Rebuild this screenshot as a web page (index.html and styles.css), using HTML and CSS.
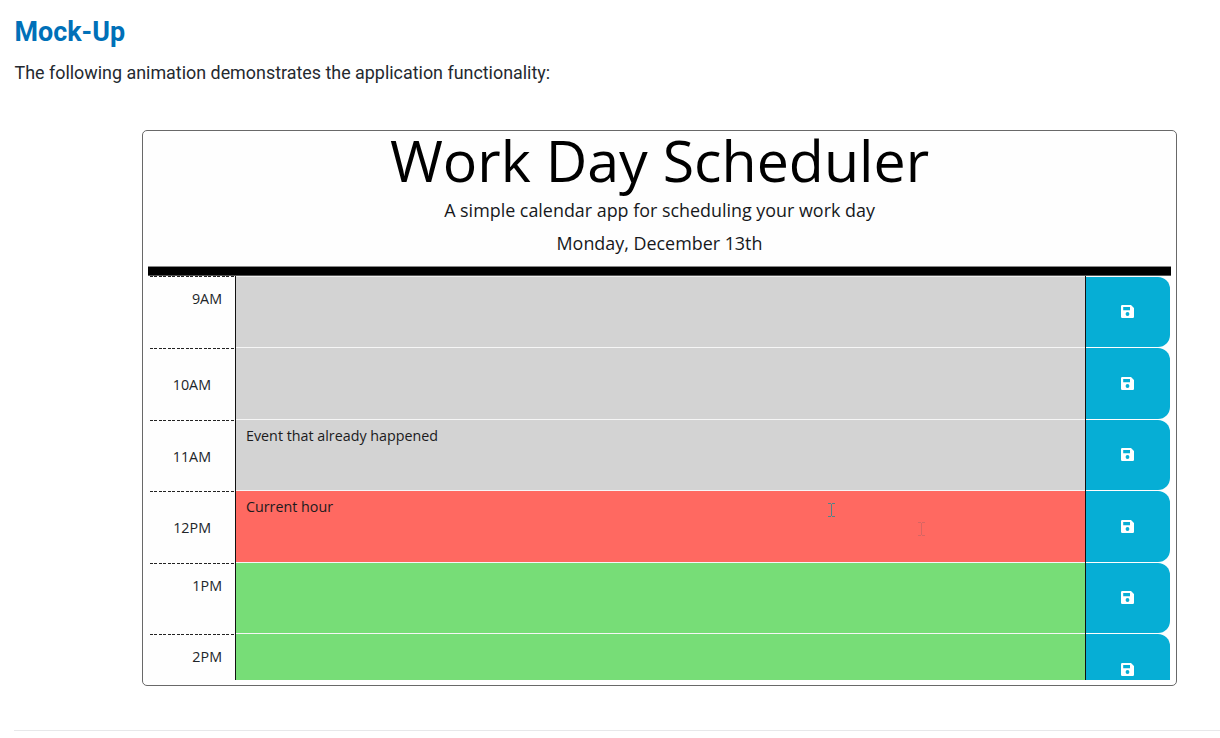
FILE: index.html
```html
<!DOCTYPE html>
<html lang="en">
<head>
<meta charset="utf-8">
<title>Work Day Scheduler</title>
<link rel="stylesheet" href="styles.css">
</head>
<body>
<svg class="defs" aria-hidden="true">
  <symbol id="save" viewBox="0 0 13 13"><path fill-rule="evenodd" d="M1.2 0H10l3 3v8.8q0 1.2-1.2 1.2H1.2Q0 13 0 11.8V1.2Q0 0 1.2 0zM2.2 2v3.2h6.8V2zM6.5 7.1a1.9 1.9 0 1 0 0 3.8 1.9 1.9 0 0 0 0-3.8z"/></symbol>
  <symbol id="caret" viewBox="0 0 7 14"><path d="M0 .5h3M4 .5h3M0 13.500h3M4 13.500h3M3.500 1v12" fill="none" stroke="currentColor"/></symbol>
</svg>
<main class="page">
  <h2 class="heading">Mock-Up</h2>
  <p class="intro">The following animation demonstrates the application functionality:</p>
  <div class="frame">
    <div class="app">
      <header class="header">
        <h1 class="title">Work Day Scheduler</h1>
        <p class="lead">A simple calendar app for scheduling your work day</p>
        <p class="date">Monday, December 13th</p>
      </header>
      <div class="rows">
        <div class="row first"><div class="hour short">9AM</div><div class="event past"></div><div class="save"><svg class="icon"><use href="#save"/></svg></div></div>
        <div class="row"><div class="hour">10AM</div><div class="event past"></div><div class="save"><svg class="icon"><use href="#save"/></svg></div></div>
        <div class="row"><div class="hour">11AM</div><div class="event past">Event that already happened</div><div class="save"><svg class="icon"><use href="#save"/></svg></div></div>
        <div class="row"><div class="hour">12PM</div><div class="event present">Current hour<svg class="caret"><use href="#caret"/></svg><svg class="caret faded"><use href="#caret"/></svg></div><div class="save"><svg class="icon"><use href="#save"/></svg></div></div>
        <div class="row"><div class="hour short">1PM</div><div class="event future"></div><div class="save"><svg class="icon"><use href="#save"/></svg></div></div>
        <div class="row"><div class="hour short">2PM</div><div class="event future"></div><div class="save"><svg class="icon"><use href="#save"/></svg></div></div>
      </div>
    </div>
  </div>
  <hr class="rule">
</main>
</body>
</html>
```
FILE: styles.css
```css
* { box-sizing: border-box; }
body { margin: 0; background: #fff; }
.defs { position: absolute; width: 0; height: 0; }
.page { padding: 15px 0 0 14px; font-family: Roboto, sans-serif; color: #24292f; }
.heading { margin: 0 0 0 .5px; font-size: 26.900px; line-height: 35px; font-weight: 700; color: #0070b8; }
.intro { margin: 9px 0 0 .5px; font-size: 17.900px; line-height: 28px; }
.frame { width: 1035px; height: 556px; margin: 43px 0 0 128px; padding: 5px; border: 1px solid #696969; border-radius: 5px; }
.app { height: 544px; background: #fefefe; font-family: "Open Sans", sans-serif; white-space: nowrap; }
.header { height: 140px; text-align: center; color: #000; background: linear-gradient(#888 0 1px, #000 1px 9px, #555 9px) bottom / 100% 10px no-repeat; }
.title { margin: 0; font-size: 57.300px; line-height: 48px; font-weight: 400; }
.lead, .date { margin: 0; font-size: 17.900px; line-height: 32px; color: #16181b; }
.lead { margin-top: 10px; }
.date { margin-top: 1px; }
.rows { height: 404px; padding: .45px 1px 0 2px; overflow: hidden; }
.row { display: grid; grid-template-columns: 85px 851px 84px; height: 71.600px; }
.hour { padding: 23px 24px 0 0; text-align: right; font-size: 14.300px; line-height: 28px; color: #212529; background: repeating-linear-gradient(90deg, #222 0 3px, transparent 3px 4.480px) 0 0 / 100% 1px no-repeat; }
.short { padding: 9px 13px 0 0; }
.event { position: relative; padding: 4px 10px; border: solid #111; border-width: 0 1px; font-size: 14.300px; line-height: 24px; color: #1b1b1d; box-shadow: inset 0 -1px #f6f6f6; }
.first .event { box-shadow: inset 0 -1px #f6f6f6, inset 0 1px #f0f0f0; }
.past { background: #d3d3d3; }
.present { background: #ff6961; }
.future { background: #77dd77; }
.save { display: flex; align-items: center; justify-content: center; margin-bottom: 1px; padding-bottom: .5px; border-radius: 0 12px 12px 0; background: #06aed5; }
.first .save { margin-top: 1px; padding-bottom: 1.500px; }
.icon { width: 13px; height: 13px; margin-right: 1px; fill: #fff; }
.caret { position: absolute; left: 592px; top: 12px; width: 7px; height: 14px; color: #4f8589; }
.faded { left: 682px; top: 31px; color: #d76562; }
.rule { height: 1px; margin: 44px 0 0; border: 0; background: #e7e8ea; }
```
